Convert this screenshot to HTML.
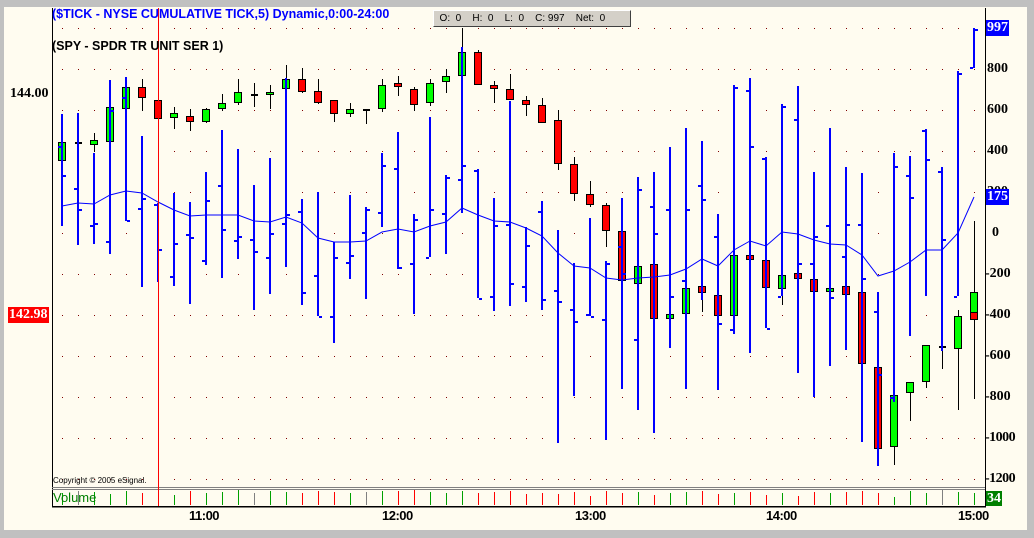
<!DOCTYPE html>
<html><head><meta charset="utf-8"><style>
html,body{margin:0;padding:0;background:#c0c0c0;}
body{width:1034px;height:538px;overflow:hidden;position:relative;font-family:"Liberation Sans",sans-serif;}
#frame{position:absolute;left:4px;top:7px;width:1023px;height:523px;background:#fffcf0;}
.t{position:absolute;white-space:nowrap;}
.ax{font-family:"Liberation Serif",serif;font-weight:bold;font-size:14px;color:#000;}
.tm{font-family:"Liberation Sans",sans-serif;font-weight:bold;font-size:13px;letter-spacing:-0.5px;color:#000;}
</style></head><body>
<div id="frame"></div>
<svg id="s" width="1034" height="538" style="position:absolute;left:0;top:0" xmlns="http://www.w3.org/2000/svg" shape-rendering="crispEdges"></svg>
<div class="t" style="left:52px;top:7px;font-size:12.5px;font-weight:bold;color:#0000ff;">($TICK - NYSE CUMULATIVE TICK,5) Dynamic,0:00-24:00</div>
<div class="t" style="left:52px;top:39px;font-size:12.5px;font-weight:bold;color:#000;">(SPY - SPDR TR UNIT SER 1)</div>
<div class="t" style="left:433px;top:10px;width:196px;height:15px;background:#d4d0c8;border-top:1px solid #fff;border-left:1px solid #fff;border-right:1px solid #404040;border-bottom:1px solid #404040;font-size:10px;line-height:15px;color:#000;">&nbsp;&nbsp;O:&nbsp;&nbsp;0&nbsp;&nbsp;&nbsp;&nbsp;H:&nbsp;&nbsp;0&nbsp;&nbsp;&nbsp;&nbsp;L:&nbsp;&nbsp;0&nbsp;&nbsp;&nbsp;&nbsp;C: 997&nbsp;&nbsp;&nbsp;&nbsp;Net:&nbsp;&nbsp;0</div>
<div class="t ax" style="left:10px;top:86px;">144.00</div>
<div class="t ax" style="left:8px;top:307px;background:#ff0000;color:#fff;padding:0 1px;line-height:16px;">142.98</div>
<div class="t ax" style="left:987px;top:61px;">800</div>
<div class="t ax" style="left:987px;top:102px;">600</div>
<div class="t ax" style="left:987px;top:143px;">400</div>
<div class="t ax" style="left:987px;top:184px;">200</div>
<div class="t ax" style="left:992px;top:225px;">0</div>
<div class="t ax" style="left:985px;top:266px;">-200</div>
<div class="t ax" style="left:985px;top:307px;">-400</div>
<div class="t ax" style="left:985px;top:348px;">-600</div>
<div class="t ax" style="left:985px;top:389px;">-800</div>
<div class="t ax" style="left:985px;top:430px;letter-spacing:-0.5px;">-1000</div>
<div class="t ax" style="left:985px;top:471px;letter-spacing:-0.5px;">-1200</div>
<div class="t ax" style="left:1001px;top:20px;">0</div>
<div class="t ax" style="left:986px;top:20px;background:#0000ff;color:#fff;line-height:16px;padding:0 1px;">997</div>
<div class="t ax" style="left:986px;top:189px;background:#0000ff;color:#fff;line-height:16px;padding:0 1px;">175</div>
<div class="t ax" style="left:986px;top:491px;background:#008000;color:#fff;line-height:15px;padding:0 1px;">34</div>
<div class="t" style="left:53px;top:476px;font-size:8px;color:#000;">Copyright © 2005 eSignal.</div>
<div class="t" style="left:53px;top:490px;font-size:13px;color:#008000;">Volume</div>
<div class="t tm" style="left:189px;top:508px;">11:00</div>
<div class="t tm" style="left:382px;top:508px;">12:00</div>
<div class="t tm" style="left:575px;top:508px;">13:00</div>
<div class="t tm" style="left:766px;top:508px;">14:00</div>
<div class="t tm" style="left:958px;top:508px;">15:00</div>
<script>
var s=document.getElementById('s'),h='';
function r(x,y,w,hh,c,st){h+='<rect x="'+x+'" y="'+y+'" width="'+w+'" height="'+hh+'" fill="'+c+'"'+(st?' stroke="#000" stroke-width="1"':'')+'/>';}
function l(x1,y1,x2,y2,c,w){h+='<line x1="'+x1+'" y1="'+y1+'" x2="'+x2+'" y2="'+y2+'" stroke="'+c+'" stroke-width="'+(w||1)+'"/>';}
// grid dots
for(var gy=28;gy<=480;gy+=41){for(var i=0;i<58;i++){r(62+16*i,gy,1,1,'#800000');}}
var T=[[114,226,146,175],[113,245,188,209],[153,244,225,223],[80,254,241,110],[77,221,97,220],[136,287,208,198],[203,282,204,249],[193,286,276,243],[202,304,234,237],[172,265,260,200],[130,278,185,229],[149,259,240,236],[185,310,239,251],[158,294,257,233],[78,267,223,214],
[199,305,211,292],[192,316,275,316],[242,343,316,257],[195,279,262,255],[207,299,232,209],[153,227,212,165],[132,269,168,267],[214,314,263,219],[117,257,257,209],[175,254,213,177],[47,213,179,165],[169,298,170,298],[198,311,296,225],[101,306,224,283],[227,302,286,245],
[201,310,211,299],[230,443,290,301],[263,396,309,321],[218,316,314,316],[261,440,319,263],[198,389,246,273],[177,410,339,189],[172,433,206,233],[147,348,209,296],[128,389,280,209],[141,300,185,199],[214,390,236,323],[85,334,329,87],[78,353,90,146],[157,328,158,328],
[104,296,296,106],[86,373,119,263],[172,397,263,236],[128,366,225,297],[167,350,256,224],[173,442,224,278],[292,466,311,374],[153,402,397,166],[156,336,175,197],[129,296,130,159],[167,351,171,239],[71,296,296,73],[28,68,67,29]];
var C=[[142,160,'g'],[142,143,'k'],[140,144,'g',133,152],[107,141,'g'],[87,108,'g'],[87,97,'r',79,111],[100,118,'r'],[113,117,'g',107,129],[116,121,'r',109,131],[109,121,'g',108,123],[103,108,'g',94,111],[92,102,'g',79,105],[94,96,'k',83,107],[92,94,'g',85,109],[79,88,'g',65,79],
[79,91,'r',68,93],[91,102,'r',79,104],[100,113,'r',100,122],[109,113,'g',103,117],[109,111,'k',109,124],[85,108,'g',79,112],[83,86,'r',76,96],[89,104,'r',87,111],[83,102,'g',79,106],[76,81,'g',69,93],[52,75,'g',28,75],[52,84,'r',50,84],[85,88,'r',81,103],[89,99,'r',74,99],[100,104,'r',96,116],
[105,122,'r',98,122],[120,163,'r',110,170],[164,193,'r',157,201],[194,204,'r',181,207],[205,230,'r',203,247],[231,280,'r'],[266,283,'g'],[264,318,'r'],[314,318,'g'],[288,313,'g'],[286,292,'r',286,312],[295,315,'r'],[255,315,'g'],[255,259,'r'],[260,287,'r'],
[275,288,'g',275,305],[273,278,'r'],[279,291,'r'],[288,291,'g'],[286,294,'r'],[292,363,'r'],[367,448,'r'],[395,446,'g',395,465],[382,392,'g',382,421],[345,381,'g',345,388],[346,348,'k',346,369],[316,348,'g',310,410],[292,320,'m',221,399]];
var col={g:'#00ff00',r:'#ff0000'};
for(var i=0;i<58;i++){var x=62+16*i,c=C[i];
 if(c.length>3){l(x+0.5,c[3],x+0.5,c[4],'#000');}
 if(c[2]=='k'){r(x-3,c[0],7,2,'#000');}
 else if(c[2]=='m'){r(x-3.5,c[0]+0.5,7,20,'#00ff00',1);r(x-3.5,c[0]+20.5,7,7,'#ff0000',1);}
 else r(x-3.5,c[0]+0.5,7,c[1]-c[0],col[c[2]],1);
}
for(var i=0;i<58;i++){var x=62+16*i,t=T[i];
 r(x-1,t[0],2,t[1]-t[0],'#0000ff');r(x-4,t[2],3,2,'#0000ff');r(x+1,t[3],3,2,'#0000ff');}
var M=[206,203,204,195,191,193,202,210,216,215,215,215,221,222,217,223,238,242,242,241,232,229,232,226,222,208,215,221,222,228,236,253,266,268,278,280,278,277,275,269,259,266,250,241,246,232,234,240,244,245,255,276,271,262,250,250,233,197];
var p='';for(var i=0;i<58;i++)p+=(i?'L':'M')+(62+16*i)+','+M[i];
h+='<path d="'+p+'" fill="none" stroke="#0000ff" stroke-width="1" shape-rendering="auto"/>';
// axes
l(52.5,8,52.5,507,'#000');l(985.5,8,985.5,507,'#000');
l(52,487.5,985,487.5,'#808080');l(52,489.5,985,489.5,'#808080');
l(52,506.5,986,506.5,'#000',1.5);
// volume
var VH=[12,14,13,11,14,12,13,10,14,12,13,15,12,14,13,12,14,13,12,13,14,14,15,13,12,14,12,13,14,11,12,11,13,9,14,12,13,10,12,13,14,11,12,13,10,12,9,13,12,13,14,12,8,14,12,15,13,12];
for(var i=0;i<58;i++){var x=62+16*i,c=C[i][2];var cc=(c=='r')?'#ff0000':(c=='k'?'#808080':'#00a000');l(x+0.5,505-VH[i],x+0.5,505,cc);}
// cursor
l(158.5,8,158.5,506,'#ff0000');
s.innerHTML=h;
</script>
</body></html>
